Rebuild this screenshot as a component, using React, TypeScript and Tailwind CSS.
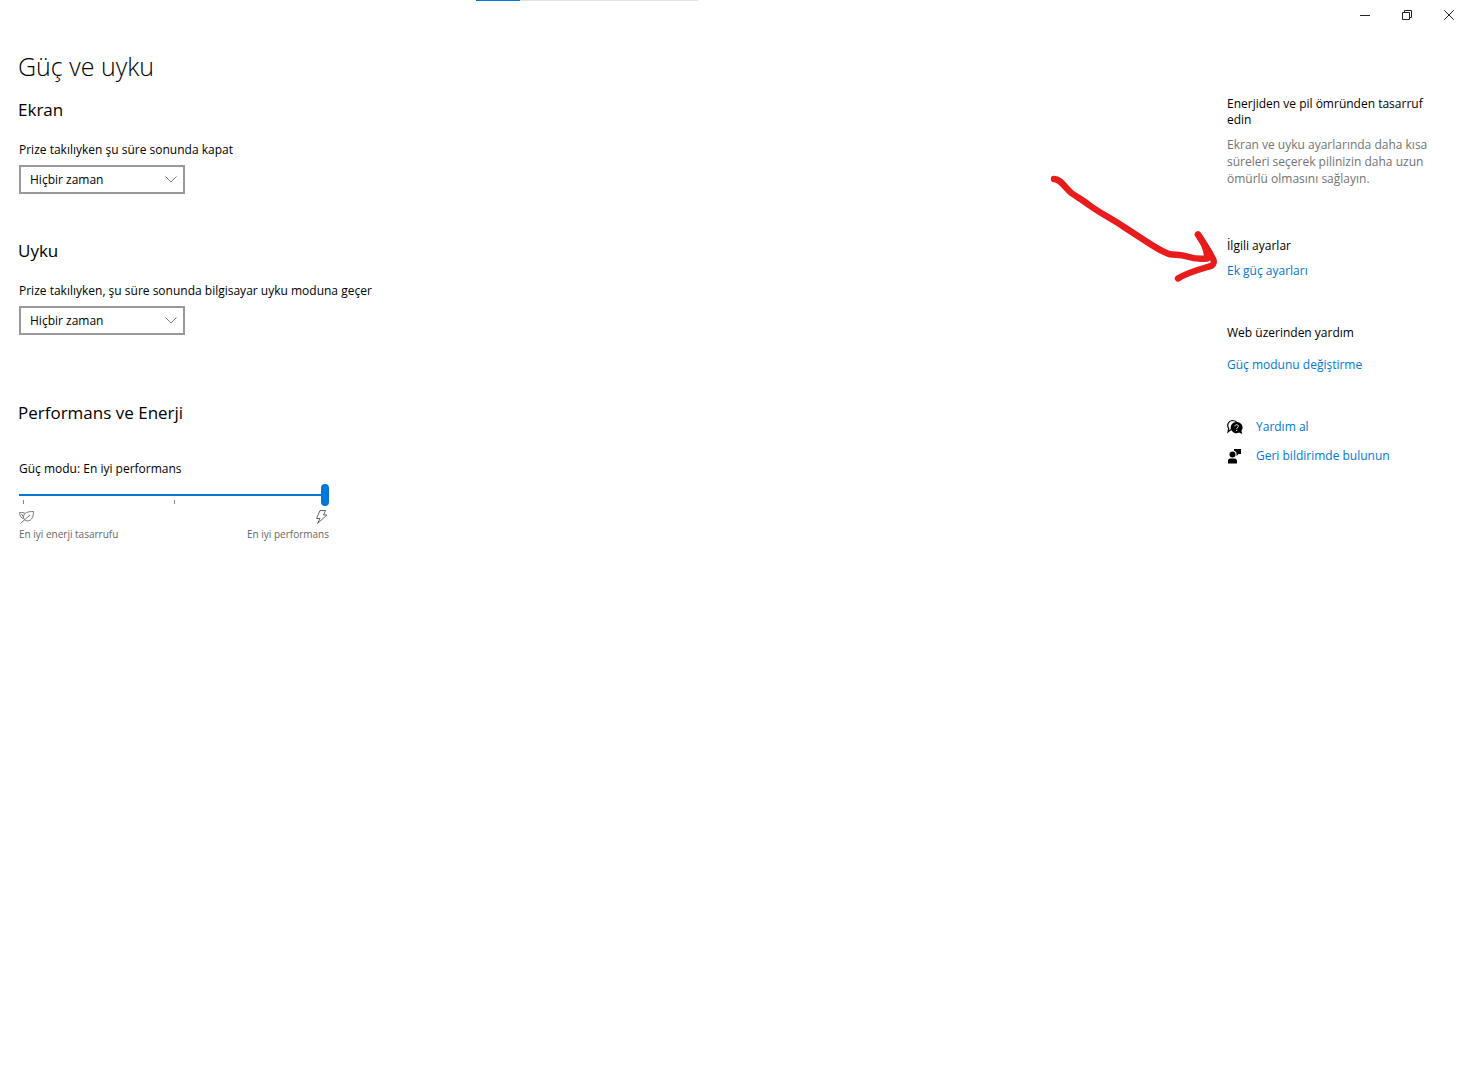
import { useState } from "react";

const timeouts = ["Hiçbir zaman", "1 dakika", "5 dakika", "10 dakika", "30 dakika", "1 saat"];

const modes = ["En iyi enerji tasarrufu", "Dengeli", "En iyi performans"];

export default function App() {
  return (
    <div className="min-h-screen bg-white font-['Open_Sans','Noto_Sans',sans-serif] text-[12px] leading-4 text-black">
      <TitleBar />
      <div className="flex items-start justify-between">
        <main className="px-[18px] pt-5">
          <h1 className="text-[25px] font-light leading-8">Güç ve uyku</h1>
          <section className="mt-4">
            <h2 className="text-[17px] leading-6">Ekran</h2>
            <TimeoutSelect id="screen" label="Prize takılıyken şu süre sonunda kapat" />
          </section>
          <section className="mt-[45px]">
            <h2 className="text-[17px] leading-6">Uyku</h2>
            <TimeoutSelect id="sleep" label="Prize takılıyken, şu süre sonunda bilgisayar uyku moduna geçer" />
          </section>
          <section className="mt-[66px]">
            <h2 className="text-[17px] leading-6">Performans ve Enerji</h2>
            <PowerMode />
          </section>
        </main>
        <Sidebar />
      </div>
    </div>
  );
}

const TitleBar = () => (
  <header className="flex h-[30px] items-start justify-between">
    <div className="ml-[476px] h-px w-[222px] bg-[#e3e3e3]">
      <div className="h-px w-[44px] bg-[#0078d7]" />
    </div>
    <div className="flex">
      <button aria-label="Simge durumuna küçült" className="flex h-[30px] w-[42px] items-center justify-center">
        <svg width="10" height="10" fill="none" stroke="#222">
          <path d="M0 5.5h10" />
        </svg>
      </button>
      <button aria-label="Önceki boyut" className="flex h-[30px] w-[42px] items-center justify-center">
        <svg width="10" height="10" fill="none" stroke="#222">
          <path d="M.5 2.5h7v7h-7zM2.5 2.5v-2h7v7h-2" />
        </svg>
      </button>
      <button aria-label="Kapat" className="flex h-[30px] w-[42px] items-center justify-center">
        <svg width="10" height="10" fill="none" stroke="#222">
          <path d="M.3.3l9.4 9.4M9.7.3L.3 9.7" />
        </svg>
      </button>
    </div>
  </header>
);

const TimeoutSelect = ({ id, label }: { id: string; label: string }) => (
  <div className="mt-5 pl-px">
    <label htmlFor={id} className="block">
      {label}
    </label>
    <div className="relative mt-[7px] w-[166px]">
      <select
        id={id}
        className="block h-[29px] w-full appearance-none border-2 border-[#999] bg-white pl-[9px] text-[12px] leading-4"
      >
        {timeouts.map((t) => (
          <option key={t}>{t}</option>
        ))}
      </select>
      <svg className="pointer-events-none absolute right-2 top-[11px]" width="12" height="7" fill="none" stroke="#777">
        <path d="M.5.5L6 6L11.5.5" />
      </svg>
    </div>
  </div>
);

const PowerMode = () => {
  const [mode, setMode] = useState(2);

  return (
    <div className="mt-9 w-[311px] pl-px">
      <label htmlFor="mode" className="block">
        Güç modu: {modes[mode]}
      </label>
      <input
        id="mode"
        type="range"
        min={0}
        max={2}
        value={mode}
        onChange={(e) => setMode(Number(e.target.value))}
        className="mt-[7px] block h-[22px] w-full appearance-none bg-transparent [&::-webkit-slider-runnable-track]:h-[2px] [&::-webkit-slider-runnable-track]:bg-[#0078d7] [&::-webkit-slider-thumb]:-mt-[10px] [&::-webkit-slider-thumb]:h-[22px] [&::-webkit-slider-thumb]:w-2 [&::-webkit-slider-thumb]:appearance-none [&::-webkit-slider-thumb]:rounded-full [&::-webkit-slider-thumb]:bg-[#0078d7]"
      />
      <div className="-mt-[6px] flex h-1 justify-between px-1">
        <span className="w-px bg-[#888]" />
        <span className="w-px bg-[#888]" />
        <span className="w-px" />
      </div>
      <div className="mt-[5px] flex justify-between text-[10px] leading-[18px] text-[#666]">
        <div>
          <LeafIcon />
          <p>{modes[0]}</p>
        </div>
        <div className="flex flex-col items-end">
          <BoltIcon />
          <p>{modes[2]}</p>
        </div>
      </div>
    </div>
  );
};

const Sidebar = () => (
  <aside className="w-[243px] shrink-0 pr-8 pt-[66px]">
    <h3>Enerjiden ve pil ömründen tasarruf edin</h3>
    <p className="mt-2 leading-[17px] text-[#737373]">
      Ekran ve uyku ayarlarında daha kısa süreleri seçerek pilinizin daha uzun ömürlü olmasını sağlayın.
    </p>

    <h3 className="mt-[51px]">İlgili ayarlar</h3>
    <div className="relative mt-[9px]">
      <a href="#power" className="text-[#0078d7]">
        Ek güç ayarları
      </a>
      <Arrow />
    </div>

    <h3 className="mt-[46px]">Web üzerinden yardım</h3>
    <a href="#change-mode" className="mt-4 block text-[#0078d7]">
      Güç modunu değiştirme
    </a>

    <div className="mt-[46px] flex flex-col gap-[13px]">
      <a href="#help" className="flex items-center gap-[13px] text-[#0078d7]">
        <HelpIcon />
        Yardım al
      </a>
      <a href="#feedback" className="flex items-center gap-[13px] text-[#0078d7]">
        <FeedbackIcon />
        Geri bildirimde bulunun
      </a>
    </div>
  </aside>
);

// hand drawn arrow that points at the link
const Arrow = () => (
  <svg
    className="pointer-events-none absolute -top-[103px] right-full"
    width="197"
    height="130"
    viewBox="0 0 197 130"
    fill="none"
    stroke="#e81c1c"
    strokeWidth="6.4"
    strokeLinecap="round"
    strokeLinejoin="round"
  >
    <path d="M24 19C31 19 35 28 42 33.5C47 37 53 40 59 45C70 53 82 59 94 67L121 84.500C129 89.500 135 93 140 94.300C146 95 151 94.500 157 96.500C164 99 171 99 177 98.500" />
    <path d="M168 74.500C173 82 178 89 182 97Q186 103 181 106C171 109 158 112 148 118.500" />
    <path d="M168 74.500C173 81 176 88 177 95L180 94z" fill="#e81c1c" />
  </svg>
);

const LeafIcon = () => (
  <svg width="16" height="16" viewBox="0 0 16 16" fill="none" stroke="#777">
    <path d="M1.500 14.500L11 6M14.500 2.500C9 2.500 5 3.500 4.500 7.500C4.300 10 6 12 8.500 12C13 11.500 14.500 7.500 14.500 2.500zM4.500 9.500C2 9 .7 7 .6 3.500C3 3.300 5 3.600 6 4.500M2.500 5L4.500 8" />
  </svg>
);

const BoltIcon = () => (
  <svg width="16" height="16" viewBox="0 0 16 16" fill="none" stroke="#666">
    <path d="M7 1.500H12.500L10.500 6H14L4.500 14.500L7 9.500H3.500z" />
  </svg>
);

const HelpIcon = () => (
  <svg width="16" height="16" viewBox="0 0 16 16" fill="none">
    <path d="M4 10.500L1 13L1.700 9.500C-.7 5.500 2 1.500 5.500 1.500C8 1.500 9.500 2.500 10.500 4" stroke="#000" strokeWidth="1.200" />
    <path d="M9.500 3A5.600 5.600 0 1 0 12 13.500L15.200 15L14.400 11.800A5.500 5.500 0 0 0 9.500 3z" fill="#000" />
    <path d="M8 7.200C8 5.200 11.300 5.200 11.300 7.200C11.300 8.500 9.700 8.600 9.700 9.900M9.700 10.800V12" stroke="#fff" />
  </svg>
);

const FeedbackIcon = () => (
  <svg width="16" height="16" viewBox="0 0 16 16" fill="#000">
    <circle cx="5.500" cy="6.500" r="3" />
    <path d="M1 15.500V13C1 11.500 2 10.500 3.500 10.500H7.500C9 10.500 10 11.500 10 13V15.500zM7 1H14V6H11.500L9.500 8V5C9 3.500 8.200 3 7 2.700z" />
  </svg>
);
